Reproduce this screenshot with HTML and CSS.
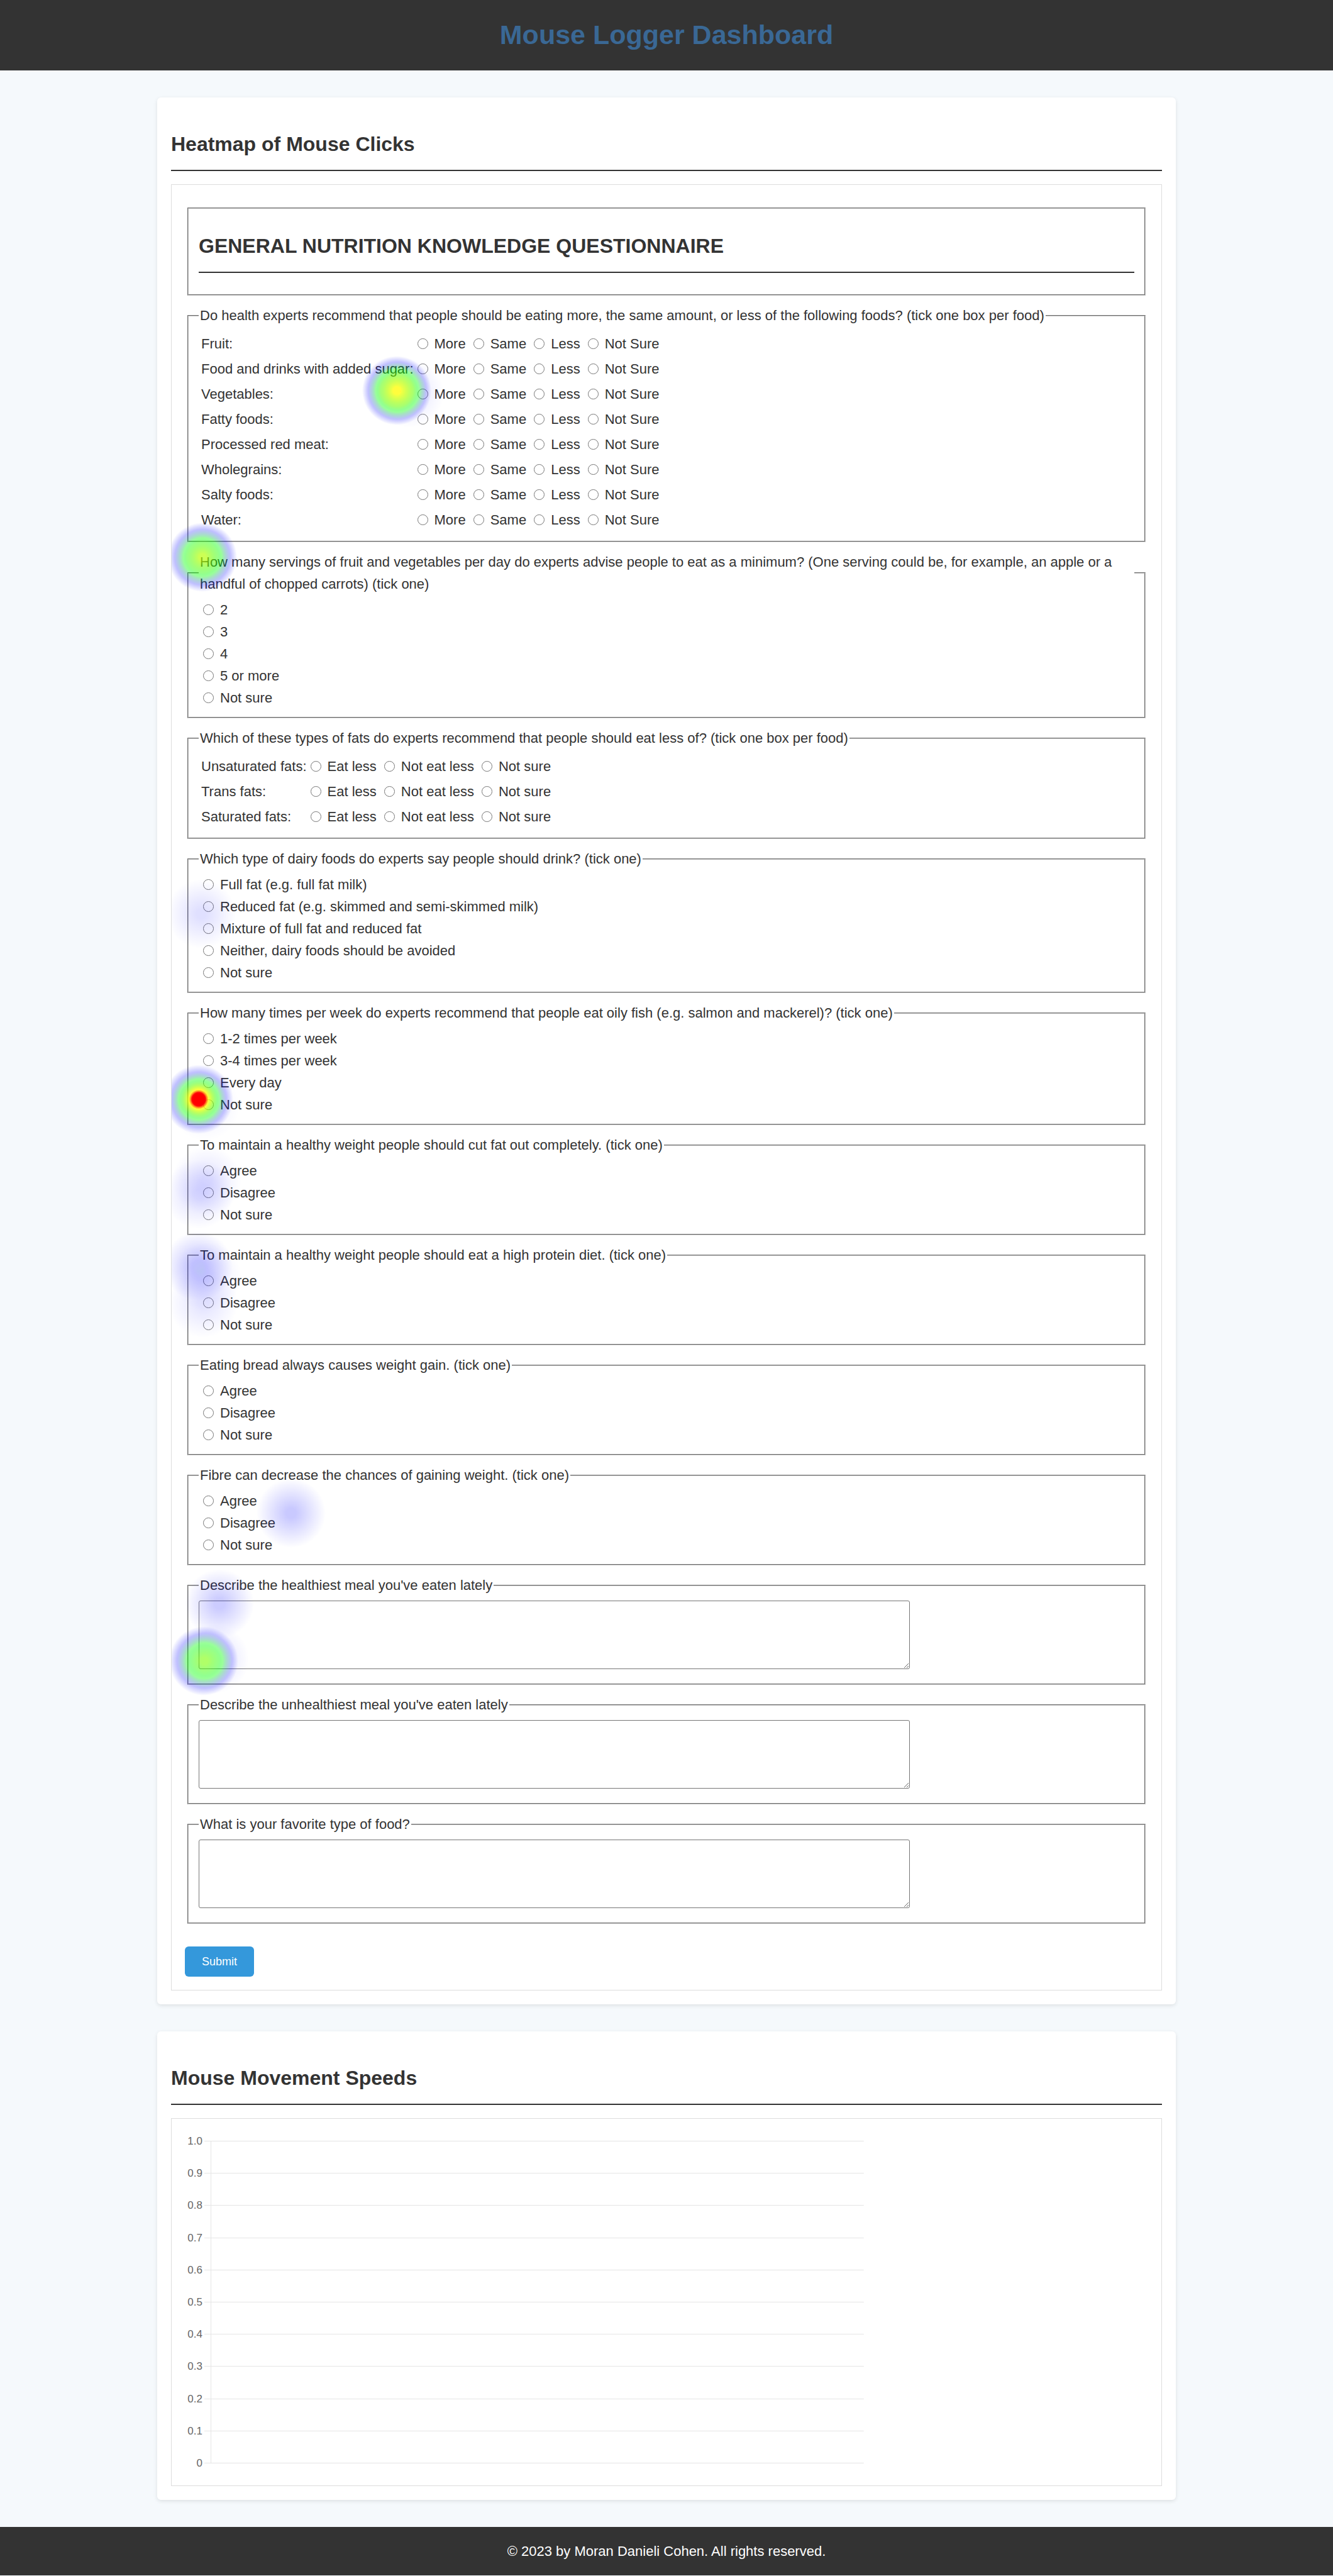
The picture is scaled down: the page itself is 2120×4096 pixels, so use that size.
FILE: index.html
```html
<!DOCTYPE html>
<html lang="en">
<head>
<meta charset="utf-8">
<title>Mouse Logger Dashboard</title>
<link rel="stylesheet" href="styles.css">
</head>
<body>
<header class="site-header">
  <h1 class="site-title">Mouse Logger Dashboard</h1>
</header>

<main class="dashboard">
  <section class="card">
    <h2 class="card-title">Heatmap of Mouse Clicks</h2>
    <div class="panel heatmap-panel">
      <form class="survey">
        <fieldset class="group intro">
          <h2 class="card-title">GENERAL NUTRITION KNOWLEDGE QUESTIONNAIRE</h2>
        </fieldset>

        <fieldset class="group">
          <legend>Do health experts recommend that people should be eating more, the same amount, or less of the following foods? (tick one box per food)</legend>
          <table class="matrix">
            <tr><th scope="row">Fruit:</th><td><label><input type="radio" name="fruit">More</label></td><td><label><input type="radio" name="fruit">Same</label></td><td><label><input type="radio" name="fruit">Less</label></td><td><label><input type="radio" name="fruit">Not Sure</label></td></tr>
            <tr><th scope="row">Food and drinks with added sugar:</th><td><label><input type="radio" name="sugar">More</label></td><td><label><input type="radio" name="sugar">Same</label></td><td><label><input type="radio" name="sugar">Less</label></td><td><label><input type="radio" name="sugar">Not Sure</label></td></tr>
            <tr><th scope="row">Vegetables:</th><td><label><input type="radio" name="vegetables">More</label></td><td><label><input type="radio" name="vegetables">Same</label></td><td><label><input type="radio" name="vegetables">Less</label></td><td><label><input type="radio" name="vegetables">Not Sure</label></td></tr>
            <tr><th scope="row">Fatty foods:</th><td><label><input type="radio" name="fatty">More</label></td><td><label><input type="radio" name="fatty">Same</label></td><td><label><input type="radio" name="fatty">Less</label></td><td><label><input type="radio" name="fatty">Not Sure</label></td></tr>
            <tr><th scope="row">Processed red meat:</th><td><label><input type="radio" name="meat">More</label></td><td><label><input type="radio" name="meat">Same</label></td><td><label><input type="radio" name="meat">Less</label></td><td><label><input type="radio" name="meat">Not Sure</label></td></tr>
            <tr><th scope="row">Wholegrains:</th><td><label><input type="radio" name="grains">More</label></td><td><label><input type="radio" name="grains">Same</label></td><td><label><input type="radio" name="grains">Less</label></td><td><label><input type="radio" name="grains">Not Sure</label></td></tr>
            <tr><th scope="row">Salty foods:</th><td><label><input type="radio" name="salty">More</label></td><td><label><input type="radio" name="salty">Same</label></td><td><label><input type="radio" name="salty">Less</label></td><td><label><input type="radio" name="salty">Not Sure</label></td></tr>
            <tr><th scope="row">Water:</th><td><label><input type="radio" name="water">More</label></td><td><label><input type="radio" name="water">Same</label></td><td><label><input type="radio" name="water">Less</label></td><td><label><input type="radio" name="water">Not Sure</label></td></tr>
          </table>
        </fieldset>

        <fieldset class="group">
          <legend>How many servings of fruit and vegetables per day do experts advise people to eat as a minimum? (One serving could be, for example, an apple or a handful of chopped carrots) (tick one)</legend>
          <div class="options">
            <label><input type="radio" name="servings">2</label>
            <label><input type="radio" name="servings">3</label>
            <label><input type="radio" name="servings">4</label>
            <label><input type="radio" name="servings">5 or more</label>
            <label><input type="radio" name="servings">Not sure</label>
          </div>
        </fieldset>

        <fieldset class="group">
          <legend>Which of these types of fats do experts recommend that people should eat less of? (tick one box per food)</legend>
          <table class="matrix">
            <tr><th scope="row">Unsaturated fats:</th><td><label><input type="radio" name="unsaturated">Eat less</label></td><td><label><input type="radio" name="unsaturated">Not eat less</label></td><td><label><input type="radio" name="unsaturated">Not sure</label></td></tr>
            <tr><th scope="row">Trans fats:</th><td><label><input type="radio" name="trans">Eat less</label></td><td><label><input type="radio" name="trans">Not eat less</label></td><td><label><input type="radio" name="trans">Not sure</label></td></tr>
            <tr><th scope="row">Saturated fats:</th><td><label><input type="radio" name="saturated">Eat less</label></td><td><label><input type="radio" name="saturated">Not eat less</label></td><td><label><input type="radio" name="saturated">Not sure</label></td></tr>
          </table>
        </fieldset>

        <fieldset class="group">
          <legend>Which type of dairy foods do experts say people should drink? (tick one)</legend>
          <div class="options">
            <label><input type="radio" name="dairy">Full fat (e.g. full fat milk)</label>
            <label><input type="radio" name="dairy">Reduced fat (e.g. skimmed and semi-skimmed milk)</label>
            <label><input type="radio" name="dairy">Mixture of full fat and reduced fat</label>
            <label><input type="radio" name="dairy">Neither, dairy foods should be avoided</label>
            <label><input type="radio" name="dairy">Not sure</label>
          </div>
        </fieldset>

        <fieldset class="group">
          <legend>How many times per week do experts recommend that people eat oily fish (e.g. salmon and mackerel)? (tick one)</legend>
          <div class="options">
            <label><input type="radio" name="fish">1-2 times per week</label>
            <label><input type="radio" name="fish">3-4 times per week</label>
            <label><input type="radio" name="fish">Every day</label>
            <label><input type="radio" name="fish">Not sure</label>
          </div>
        </fieldset>

        <fieldset class="group">
          <legend>To maintain a healthy weight people should cut fat out completely. (tick one)</legend>
          <div class="options">
            <label><input type="radio" name="cutfat">Agree</label>
            <label><input type="radio" name="cutfat">Disagree</label>
            <label><input type="radio" name="cutfat">Not sure</label>
          </div>
        </fieldset>

        <fieldset class="group">
          <legend>To maintain a healthy weight people should eat a high protein diet. (tick one)</legend>
          <div class="options">
            <label><input type="radio" name="protein">Agree</label>
            <label><input type="radio" name="protein">Disagree</label>
            <label><input type="radio" name="protein">Not sure</label>
          </div>
        </fieldset>

        <fieldset class="group">
          <legend>Eating bread always causes weight gain. (tick one)</legend>
          <div class="options">
            <label><input type="radio" name="bread">Agree</label>
            <label><input type="radio" name="bread">Disagree</label>
            <label><input type="radio" name="bread">Not sure</label>
          </div>
        </fieldset>

        <fieldset class="group">
          <legend>Fibre can decrease the chances of gaining weight. (tick one)</legend>
          <div class="options">
            <label><input type="radio" name="fibre">Agree</label>
            <label><input type="radio" name="fibre">Disagree</label>
            <label><input type="radio" name="fibre">Not sure</label>
          </div>
        </fieldset>

        <fieldset class="group">
          <legend><label for="healthiest">Describe the healthiest meal you've eaten lately</label></legend>
          <textarea id="healthiest" class="answer"></textarea>
        </fieldset>

        <fieldset class="group">
          <legend><label for="unhealthiest">Describe the unhealthiest meal you've eaten lately</label></legend>
          <textarea id="unhealthiest" class="answer"></textarea>
        </fieldset>

        <fieldset class="group">
          <legend><label for="favorite">What is your favorite type of food?</label></legend>
          <textarea id="favorite" class="answer"></textarea>
        </fieldset>

        <button type="submit" class="submit">Submit</button>
      </form>

      <!-- Click intensity is accumulated as alpha, then coloured by the filter -->
      <svg class="heat-layer" aria-hidden="true">
        <defs>
          <radialGradient id="click">
            <stop offset="0.15" stop-color="#000" stop-opacity="1"/>
            <stop offset="1" stop-color="#000" stop-opacity="0"/>
          </radialGradient>
          <radialGradient id="cluster">
            <stop offset="0.1" stop-color="#000" stop-opacity="1"/>
            <stop offset="0.47" stop-color="#000" stop-opacity="0.77"/>
            <stop offset="0.79" stop-color="#000" stop-opacity="0.35"/>
            <stop offset="1" stop-color="#000" stop-opacity="0"/>
          </radialGradient>
          <filter id="palette" filterUnits="userSpaceOnUse" x="0" y="0" width="100%" height="100%" color-interpolation-filters="sRGB">
            <feColorMatrix type="matrix" values="0 0 0 1 0  0 0 0 1 0  0 0 0 1 0  0 0 0 1 0"/>
            <feComponentTransfer>
              <feFuncR type="table" tableValues="0 0 0 0 0 0 0 0 0 0 0 0 .17 .33 .5 .67 .83 1 1 1 1"/>
              <feFuncG type="table" tableValues="0 0 0 0 0 0 .2 .4 .6 .8 1 1 1 1 1 1 1 1 .5 0 0"/>
              <feFuncB type="table" tableValues="1 1 1 1 1 1 .8 .6 .4 .2 0 0 0 0 0 0 0 0 0 0 0"/>
              <feFuncA type="table" tableValues="0 .05 .1 .15 .2 .25 .28 .31 .34 .37 .4 .43 .48 .54 .6 .66 .71 .76 .86 .97 1"/>
            </feComponentTransfer>
          </filter>
        </defs>
        <g filter="url(#palette)" fill="url(#click)">
          <circle cx="358" cy="327" r="55" fill="url(#cluster)" opacity=".84"/>
          <circle cx="378" cy="331" r="55" opacity=".1"/>
          <circle cx="49" cy="592" r="55" fill="url(#cluster)" opacity=".76"/>
          <circle cx="47" cy="1159" r="55" opacity=".12"/>
          <circle cx="43" cy="1454" r="55"/>
          <circle cx="53" cy="1465" r="55" opacity=".06"/>
          <circle cx="43" cy="1605" r="55" opacity=".12"/>
          <circle cx="56" cy="1583" r="55" opacity=".1"/>
          <circle cx="42" cy="1719" r="55" opacity=".22"/>
          <circle cx="56" cy="1736" r="55" opacity=".08"/>
          <circle cx="50" cy="1778" r="55" opacity=".1"/>
          <circle cx="190" cy="2112" r="55" opacity=".21"/>
          <circle cx="76" cy="2256" r="55" opacity=".2"/>
          <circle cx="51" cy="2347" r="55" fill="url(#cluster)" opacity=".66"/>
          <circle cx="68" cy="2344" r="55" opacity=".12"/>
        </g>
      </svg>
    </div>
  </section>

  <section class="card">
    <h2 class="card-title">Mouse Movement Speeds</h2>
    <div class="panel">
      <svg class="chart" viewBox="0 0 1102 583" role="img" aria-label="Mouse movement speeds">
        <path class="grid" d="M52 35.5H1101M52 86.5H1101M52 137.5H1101M52 189.5H1101M52 240.5H1101M52 291.5H1101M52 342.5H1101M52 393.5H1101M52 445.5H1101M52 496.5H1101M52 547.5H1101M62.5 35V548"/>
        <g class="ticks">
          <text x="49" y="41">1.0</text>
          <text x="49" y="92">0.9</text>
          <text x="49" y="143">0.8</text>
          <text x="49" y="195">0.7</text>
          <text x="49" y="246">0.6</text>
          <text x="49" y="297">0.5</text>
          <text x="49" y="348">0.4</text>
          <text x="49" y="399">0.3</text>
          <text x="49" y="451">0.2</text>
          <text x="49" y="502">0.1</text>
          <text x="49" y="553">0</text>
        </g>
      </svg>
    </div>
  </section>
</main>

<footer class="site-footer">© 2023 by Moran Danieli Cohen. All rights reserved.</footer>
</body>
</html>
```
FILE: styles.css
```css
* {
  box-sizing: border-box;
}

body {
  margin: 0;
  background: #f5f9fc;
  color: #333;
  font: 22px/35px "Liberation Sans", Arial, Helvetica, sans-serif;
}

.site-header {
  padding: 21px 22px 22px;
  background: #333;
  text-align: center;
}

.site-title {
  margin: 0;
  color: #3a6895;
  font-size: 43px;
  line-height: 69px;
}

.dashboard {
  display: flex;
  flex-direction: column;
  gap: 43px;
  width: 90%;
  max-width: 1620px;
  margin: 0 auto;
  padding: 43px 0;
}

.card {
  padding: 22px;
  border-radius: 6px;
  background: #fff;
  box-shadow: 0 2px 6px rgba(0, 0, 0, 0.1);
}

.card-title {
  margin: 27px 0 21px;
  padding-bottom: 15px;
  border-bottom: 2px solid #333;
  font-size: 32px;
  line-height: 51px;
}

.panel {
  position: relative;
  border: 1px solid #ddd;
}

.heatmap-panel {
  padding: 36px 21px 21px;
}

.survey {
  display: flex;
  flex-direction: column;
  gap: 14px;
}

.group {
  min-width: 0;
  margin: 0 4px;
  padding: 6px 16px 13px;
  border: 2px groove #c0c0c0;
}

.intro {
  padding-top: 7px;
}

legend {
  padding: 0 2px;
}

.options {
  display: flex;
  flex-direction: column;
  align-items: flex-start;
  padding-left: 7px;
}

.options label,
.matrix label {
  display: flex;
  align-items: center;
  gap: 10px;
}

input[type="radio"] {
  width: 17px;
  height: 17px;
  margin: 0;
}

.matrix {
  margin: 1px 0;
  border-collapse: collapse;
}

.matrix th,
.matrix td {
  height: 40px;
  padding: 0 12px 0 0;
  text-align: left;
  font-weight: normal;
  white-space: nowrap;
}

.matrix th {
  padding: 0 6px 0 4px;
}

.answer {
  display: block;
  width: 76%;
  height: 109px;
  margin: 1px 0 10px;
  border: 1px solid #767676;
  border-radius: 3px;
  background: #fff;
}

.submit {
  align-self: flex-start;
  margin-top: 22px;
  padding: 0 27px;
  border: 0;
  border-radius: 6px;
  background: #3498db;
  color: #fff;
  font: 18px/48px "Liberation Sans", Arial, Helvetica, sans-serif;
}

.heat-layer {
  position: absolute;
  inset: 0;
  width: 100%;
  height: 100%;
  pointer-events: none;
}

.chart {
  display: block;
  width: 70%;
}

.grid {
  fill: none;
  stroke: #e5e5e5;
}

.ticks {
  fill: #666;
  font-size: 17px;
  text-anchor: end;
}

.site-footer {
  padding: 21px;
  background: #333;
  color: #fff;
  text-align: center;
}
```
